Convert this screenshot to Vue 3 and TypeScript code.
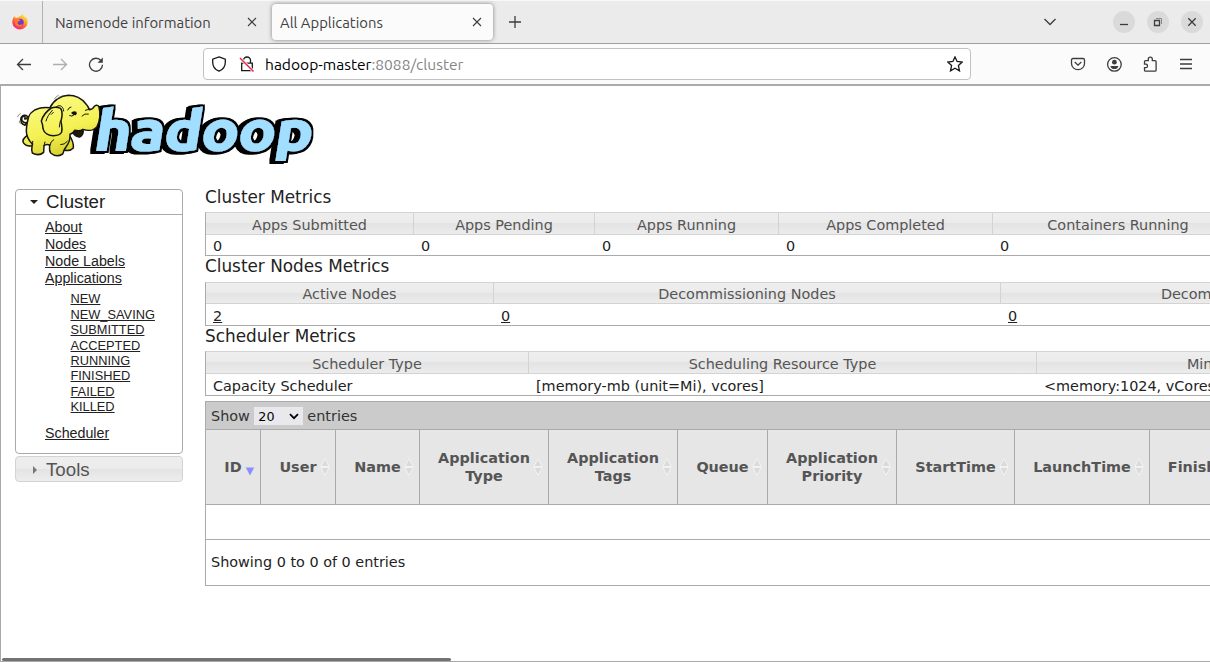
<script setup lang="ts">
interface MetricTable {
  key: string
  title: string
  columns: string[]
  values: string[]
  linked?: boolean
}

const metricTables: MetricTable[] = [
  {
    key: 'cluster',
    title: 'Cluster Metrics',
    columns: ['Apps Submitted', 'Apps Pending', 'Apps Running', 'Apps Completed', 'Containers Running'],
    values: ['0', '0', '0', '0', '0'],
  },
  {
    key: 'nodes',
    title: 'Cluster Nodes Metrics',
    columns: ['Active Nodes', 'Decommissioning Nodes', 'Decommissioned Nodes'],
    values: ['2', '0', '0'],
    linked: true,
  },
  {
    key: 'scheduler',
    title: 'Scheduler Metrics',
    columns: ['Scheduler Type', 'Scheduling Resource Type', 'Minimum Allocation'],
    values: ['Capacity Scheduler', '[memory-mb (unit=Mi), vcores]', '<memory:1024, vCores:1>'],
  },
]

const appColumns: string[] = [
  'ID', 'User', 'Name', 'Application Type', 'Application Tags', 'Queue',
  'Application Priority', 'StartTime', 'LaunchTime', 'FinishTime',
]

const clusterLinks: string[] = ['About', 'Nodes', 'Node Labels', 'Applications']
const appStates: string[] = [
  'NEW', 'NEW_SAVING', 'SUBMITTED', 'ACCEPTED', 'RUNNING', 'FINISHED', 'FAILED', 'KILLED',
]
</script>

<template>
  <div class="window">
    <div class="tabbar">
      <div class="brand">
        <svg width="18" height="18" viewBox="0 0 18 18">
          <defs>
            <linearGradient id="fox" x1="0.8" y1="0" x2="0.2" y2="1">
              <stop offset="0" stop-color="#fff04a" />
              <stop offset="0.4" stop-color="#ffa02c" />
              <stop offset="0.7" stop-color="#ff4a3d" />
              <stop offset="1" stop-color="#ef2090" />
            </linearGradient>
          </defs>
          <path d="M3.3 3.2 4.8 5 7.3 4.2Q8.800 2.800 10 3Q10.300 1.500 11.600.8Q12 3.200 14 4.300L14.500 3.500Q17 6.300 16.600 10A7.700 7.300 0 0 1 1.300 10Q1.200 6.500 2.300 4.800Z" />
          <circle cx="9" cy="9.400" r="3.700" />
          <path d="M3.500 6.200Q6 4.700 8.500 6.500L9.700 7.400 7 8.700Q5.900 10 7.100 11.300 9.500 12.800 11.600 10.500 11.700 12.500 9.500 13.300 5.500 13.800 3.900 10.500Z" />
        </svg>
      </div>
      <div class="tab">
        <span class="tab-title">Namenode information</span>
        <svg class="close" width="10" height="10" viewBox="0 0 10 10"><path d="M1 1 9 9M9 1 1 9" /></svg>
      </div>
      <div class="tab active">
        <span class="tab-title">All Applications</span>
        <svg class="close" width="10" height="10" viewBox="0 0 10 10"><path d="M1 1 9 9M9 1 1 9" /></svg>
      </div>
      <svg class="plus" width="12" height="12" viewBox="0 0 12 12"><path d="M6 0V12M0 6H12" /></svg>
      <svg class="chevron" width="14" height="8" viewBox="0 0 14 8"><path d="M1.500 1 7 6.500 12.500 1" /></svg>
      <div class="controls">
        <span class="ctl"><svg width="22" height="22" viewBox="0 0 22 22"><path d="M7 13.500H15" /></svg></span>
        <span class="ctl"><svg width="22" height="22" viewBox="0 0 22 22"><path d="M7.500 9.500H12.500V14.500H7.500Z" /><path class="faint" d="M9 7.500H14.500V13" /></svg></span>
        <span class="ctl"><svg width="22" height="22" viewBox="0 0 22 22"><path d="M7.300 7.300 14.700 14.700M14.700 7.300 7.300 14.700" /></svg></span>
      </div>
    </div>

    <div class="navbar">
      <svg class="nav-icon back" width="16" height="16" viewBox="0 0 16 16"><path d="M15 8.500H1.500M7 3 1.500 8.500 7 14" /></svg>
      <svg class="nav-icon forward" width="16" height="16" viewBox="0 0 16 16"><path d="M1 8.500H14.500M9 3 14.500 8.500 9 14" /></svg>
      <svg class="nav-icon reload" width="16" height="16" viewBox="0 0 16 16"><path d="M13.100 4.700A6.500 6.500 0 1 0 14.500 8.800" /><path class="solid" d="M14.800 1.500V6.800H9.500Z" /></svg>
      <div class="urlbar">
        <svg class="shield" width="16" height="16" viewBox="0 0 16 16"><path d="M8 .9 14.300 3.100V6.200C14.300 10.600 12 13.600 8 15.200 4 13.600 1.700 10.600 1.700 6.200V3.100Z" /></svg>
        <svg class="lock" width="16" height="16" viewBox="0 0 16 16">
          <path d="M4.500 7V4.500A3.500 3.500 0 0 1 11.500 4.500V7M2.700 7.200H13.300V14.700H2.700Z" />
          <path class="halo" d="M1 2 14.500 15.500" /><path class="slash" d="M1 2 14.500 15.500" />
        </svg>
        <span class="url"><b>hadoop-master</b>:8088/cluster</span>
        <svg class="star" width="16" height="16" viewBox="0 0 16 16"><path d="M8 .9 10.100 5.500 15.200 6.100 11.400 9.500 12.500 14.900 8 12.300 3.500 14.900 4.600 9.500.8 6.100 5.900 5.500Z" /></svg>
      </div>
      <div class="nav-actions">
        <svg width="16" height="16" viewBox="0 0 16 16"><path d="M3 2.500H13Q14.500 2.500 14.500 4V7.500A6.500 6.200 0 0 1 1.500 7.500V4Q1.500 2.500 3 2.500ZM4.700 6 8 9.200 11.300 6" /></svg>
        <svg width="16" height="16" viewBox="0 0 16 16"><circle cx="8.400" cy="8.400" r="6.800" /><circle class="solid" cx="8.400" cy="6.200" r="2.400" /><path class="solid" d="M4.400 9.900H12.400Q11.900 13 8.400 13T4.400 9.900Z" /></svg>
        <svg width="16" height="16" viewBox="0 0 16 16"><path d="M2.500 5.700Q2.500 4.700 3.500 4.700H6.300V3A2 1.900 0 0 1 10.300 3V4.700H13.100Q14.100 4.700 14.100 5.700V14.200Q14.100 15.200 13.100 15.200H3.500Q2.500 15.200 2.500 14.200V11.700H4.100A1.900 1.800 0 0 0 4.100 8.200H2.500Z" /></svg>
        <svg width="16" height="16" viewBox="0 0 16 16"><path d="M2 3.500H14M2 8H14M2 12.500H14" /></svg>
      </div>
    </div>

    <div class="page">
      <svg class="logo" width="320" height="90" viewBox="0 0 960 270">
        <defs>
          <linearGradient id="hide" gradientUnits="userSpaceOnUse" x1="140" y1="30" x2="190" y2="210">
            <stop offset="0" stop-color="#fbfb86" />
            <stop offset="0.6" stop-color="#f4f154" />
            <stop offset="1" stop-color="#d6d02c" />
          </linearGradient>
          <filter id="extrude" x="-10%" y="-20%" width="120%" height="140%">
            <feMorphology in="SourceAlpha" operator="dilate" radius="6" result="outline" />
            <feOffset in="outline" dx="-6" dy="1" result="step1" />
            <feOffset in="outline" dx="-12" dy="2" result="step2" />
            <feMerge>
              <feMergeNode in="step2" />
              <feMergeNode in="step1" />
              <feMergeNode in="outline" />
              <feMergeNode in="SourceGraphic" />
            </feMerge>
          </filter>
        </defs>
        <g class="wordmark" filter="url(#extrude)">
          <text transform="translate(279 196) skewX(-9)" textLength="653" lengthAdjust="spacingAndGlyphs">hadoop</text>
        </g>
        <g class="elephant">
          <path d="M82 112Q72 116 66 106 63 96 71 94 78 96 74 102 82 103 82 94 72 86 63 98 59 115 75 121Z" />
          <path d="M84 150Q65 162 70 173 78 186 98 182L110 160Z" />
          <path d="M206 148Q222 170 220 189 210 200 192 195L184 165Z" />
          <path class="mouth" d="M219 136Q235 139 249 133 252 150 239 156 224 154 219 143Z" />
          <path d="M82 112C84 88 100 74 118 70 130 66 140 67 150 68 160 46 182 32 205 31 225 31 246 42 258 57 264 63 266 70 268 74 276 73 280 70 282 65 287 59 295 60 297 66 301 82 301 104 291 125 280 138 262 138 249 133 240 140 232 138 224 136 220 143 214 147 210 148 211 164 205 177 198 186 191 194 191 201 188 207 175 215 161 212 152 204 146 195 149 187 149 180 142 177 136 178 132 182L131 202C122 210 108 210 97 204 93 195 96 185 97 177 84 164 79 150 79 137 79 127 81 118 82 112Z" />
          <path d="M154 69C137 80 128 95 124 108 128 118 129 123 129 131 132 145 146 152 160 152 172 152 182 148 185 141 188 129 184 118 183 108 187 94 188 80 182 70 172 66 163 66 154 69Z" />
          <path class="line" d="M157 76C147 87 141 97 138 108M154 88 160 82M181 108 178 126M168 66C182 56 190 66 191 78M203 75Q206 67 213 66M209 92Q216 96 222 90M150 181Q151 169 161 164M182 179Q193 180 202 169M98 180 98 169M132 182 135 171M246 93Q254 84 265 87M256 76 270 72" />
          <path class="pupil" d="M213 84Q219 76 229 80 233 86 227 91 219 91 213 84Z" />
          <path class="motion" d="M53 95Q54 89 61 86M59 107Q53 111 61 116M164 41Q167 35 175 31M172 41Q175 36 183 34" />
        </g>
      </svg>

      <div class="body">
        <aside class="sidebar">
          <section class="panel open">
            <h3><i class="caret down"></i>Cluster</h3>
            <div class="links">
              <a v-for="link in clusterLinks" :key="link">{{ link }}</a>
              <div class="states">
                <a v-for="state in appStates" :key="state">{{ state }}</a>
              </div>
              <a>Scheduler</a>
            </div>
          </section>
          <section class="panel closed"><h3><i class="caret right"></i>Tools</h3></section>
        </aside>

        <main class="content">
          <section v-for="table in metricTables" :key="table.key" class="metrics" :class="table.key">
            <h2>{{ table.title }}</h2>
            <div class="grid">
              <div v-for="column in table.columns" :key="column" class="head">{{ column }}</div>
              <div v-for="(value, i) in table.values" :key="i" class="value"><span :class="{ linked: table.linked }">{{ value }}</span></div>
            </div>
          </section>

          <section class="apps">
            <div class="toolbar">
              Show
              <span class="select">20<svg width="10" height="7" viewBox="0 0 10 7"><path d="M1 1.200 5 5.200 9 1.200" /></svg></span>
              entries
            </div>
            <div class="app-grid">
              <div v-for="(column, i) in appColumns" :key="column" class="app-head">
                <span>{{ column }}</span>
                <svg v-if="i === 0" class="sort sorted" width="10" height="18" viewBox="0 0 10 18"><path d="M.8 9.500H9.200L5 17.500Z" /></svg>
                <svg v-else class="sort" width="10" height="18" viewBox="0 0 10 18"><path d="M5 .8 9 8.500H1ZM1 9.500H9L5 17.200Z" /></svg>
              </div>
            </div>
            <div class="empty-row"></div>
            <div class="info">Showing 0 to 0 of 0 entries</div>
          </section>
        </main>
      </div>
      <div class="scroll-thumb"></div>
    </div>
  </div>
</template>

<style>
html, body { margin: 0; overflow: hidden; background: #fff; }
</style>

<style scoped>
* { box-sizing: border-box; }
.window { width: 1210px; height: 662px; overflow: hidden; display: flex; flex-direction: column; font-family: "DejaVu Sans", sans-serif; color: #222; }
svg { display: block; flex: none; }
svg path, svg circle { fill: none; stroke: #3d3d3d; stroke-width: 1.300; }
svg .solid { fill: #3d3d3d; stroke: none; }
.brand path, .brand circle { stroke: none; }
.brand path:first-of-type { fill: url(#fox); }
.brand circle { fill: #7138c9; }
.brand path:last-of-type { fill: #ff7a36; }

.tabbar { height: 44px; flex: none; display: flex; align-items: center; background: #ebebeb; border-top: 1px solid #f8f8f8; border-bottom: 1px solid #a0a0a0; font-family: Ubuntu, "Noto Sans", sans-serif; font-size: 14.850px; color: #414141; }
.brand { width: 43px; height: 42px; border-right: 1px solid #b2b2b2; display: flex; align-items: center; padding-left: 11px; }
.tab { width: 229px; height: 36px; display: flex; align-items: center; justify-content: space-between; padding: 0 15px 0 12px; white-space: nowrap; }
.tab.active { width: 221px; background: #fbfbfb; border-radius: 4px; box-shadow: 0 0 4px rgba(0, 0, 0, 0.45); padding: 0 11px 0 8px; }
.tab-title { padding-top: 1px; }
.close path { stroke-width: 1.100; }
.plus { margin-left: 16px; }
.chevron { margin-left: 522px; }
.controls { display: flex; gap: 12px; margin-left: 56px; }
.ctl { width: 22px; height: 22px; border-radius: 50%; background: #dadada; }
.ctl .faint { stroke: #888; stroke-width: 1; }

.navbar { height: 42px; flex: none; display: flex; align-items: center; background: #fbfbfb; border-bottom: 2px solid #aaa; }
.back { margin-left: 16px; }
.forward { margin-left: 20px; opacity: 0.4; }
.reload { margin-left: 20px; }
.urlbar { margin-left: 99px; width: 768px; height: 32px; border: 1px solid #c2c2c2; border-radius: 4px; background: #fff; display: flex; align-items: center; padding: 0 7px; }
.shield path, .lock path, .star path { stroke: #181818; }
.lock { margin-left: 12px; }
.lock .halo { stroke: #fff; stroke-width: 3; }
.lock .slash { stroke: #e22850; stroke-width: 1.500; }
.url { margin-left: 10px; padding-top: 1px; flex: 1; font-family: Ubuntu, "Noto Sans", sans-serif; font-size: 15.550px; color: #858585; white-space: nowrap; }
.url b { font-weight: 400; color: #000; }
.nav-actions { display: flex; gap: 20px; margin-left: 99px; }

.page { flex: 1; min-height: 0; position: relative; border-left: 1px solid #a9a9a9; border-bottom: 1px solid #a9a9a9; overflow: hidden; }
.logo { margin: -1px 0 0 -1px; }
.wordmark text { font: 700 164px Ubuntu, "DejaVu Sans", sans-serif; fill: #a2deff; stroke: #a2deff; stroke-width: 6; stroke-linejoin: miter; }
.elephant path { fill: url(#hide); stroke: #16160c; stroke-width: 4.500; stroke-linejoin: round; stroke-linecap: round; }
.elephant .line { fill: none; stroke-width: 3; }
.elephant .mouth { fill: #201b0c; }
.elephant .pupil { fill: #111; stroke: none; }
.elephant .motion { fill: none; stroke: #777; stroke-width: 2.500; }

.body { display: flex; align-items: flex-start; padding-left: 14px; margin-top: 14px; }
.sidebar { width: 168px; flex: none; font-family: "Liberation Sans", Arial, sans-serif; }
.panel { border: 1px solid #aaa; border-radius: 4px; }
.panel h3 { margin: 0; font-size: 18.700px; font-weight: 400; height: 25px; line-height: 24px; padding-left: 14px; display: flex; align-items: center; }
.caret { width: 0; height: 0; margin-right: 8px; flex: none; }
.caret.down { border-left: 4px solid transparent; border-right: 4px solid transparent; border-top: 4px solid #222; }
.caret.right { border-top: 4px solid transparent; border-bottom: 4px solid transparent; border-left: 4px solid #777; margin: 0 9px 0 3px; }
.open { height: 265px; }
.open h3 { border-bottom: 1px solid #aaa; }
.closed { margin-top: 2px; height: 26px; border-color: #d3d3d3; background: linear-gradient(#eeeeee, #ebebeb 49%, #e3e3e3 50%, #ededed); color: #555; }
.links { padding: 4px 0 0 29px; font-size: 14.250px; }
.links a { display: block; width: max-content; height: 17px; line-height: 17px; text-decoration: underline; }
.states { padding-left: 25.500px; margin: 4.450px 0 10.600px; font-size: 12.800px; }
.states a { height: 15.400px; line-height: 15.400px; }

.content { margin-left: 22px; width: 1330px; flex: none; font-size: 14.400px; margin-top: -3px; }
.metrics h2 { margin: 0; font-size: 16.850px; font-weight: 400; height: 26px; line-height: 22px; white-space: nowrap; }
.nodes h2, .scheduler h2 { line-height: 21px; }
.grid { display: grid; border-left: 1px solid #aaa; border-bottom: 1px solid #aaa; border-top: 1px solid #d3d3d3; height: 44px; }
.cluster .grid { grid-template-columns: 208px 181px 184px 214px 251px; grid-template-rows: 22px 20px; }
.nodes .grid { grid-template-columns: 288px 507px 494px; grid-template-rows: 21px 21px; }
.scheduler .grid { grid-template-columns: 323px 508px 443px; grid-template-rows: 22px 21px; height: 45px; }
.scheduler h2 { height: 25px; }
.head { border-right: 1px solid #d3d3d3; border-bottom: 1px solid #d3d3d3; background: linear-gradient(#eee, #ebebeb 49%, #e3e3e3 50%, #ececec); color: #555; text-align: center; line-height: 24px; white-space: nowrap; }
.nodes .head { line-height: 23px; }
.value { padding-left: 7px; line-height: 22px; white-space: nowrap; }
.nodes .value, .scheduler .value { line-height: 24px; }
.linked { text-decoration: underline; }

.apps { margin-top: 5px; border: 1px solid #aaa; width: 1320px; overflow: hidden; }
.toolbar { height: 27px; background: #cbcbcb; display: flex; align-items: center; padding-left: 5px; color: #333; gap: 4.500px; }
.select { width: 48.500px; height: 18px; background: #e9e9ed; color: #000; font-size: 12.700px; display: flex; align-items: center; justify-content: space-between; padding: 1px 4px 0 4px; }
.select path { stroke: #000; stroke-width: 1.700; }
.app-grid { display: grid; grid-template-columns: 55px 75px 84px 129px 129px 90px 129px 118px 135px 125px; height: 76px; border-top: 1px solid #aaa; border-bottom: 1px solid #aaa; background: #e6e6e6; }
.app-head { border-right: 1px solid #aaa; font-weight: 700; color: #555; line-height: 18px; text-align: center; display: flex; align-items: center; justify-content: center; padding: 0 17px; position: relative; }
.sort { position: absolute; right: 5px; top: 28px; }
.sort path { fill: #dadada; stroke: #f6f6f6; stroke-width: 0.800; }
.sort.sorted path { fill: #8d8dff; stroke: none; }
.empty-row { height: 35px; border-bottom: 1px solid #aaa; }
.info { height: 45px; line-height: 45px; padding-left: 5px; }

.scroll-thumb { position: absolute; left: 1px; bottom: 0; width: 449px; height: 3px; background: #737373; border-radius: 2px; }
</style>
